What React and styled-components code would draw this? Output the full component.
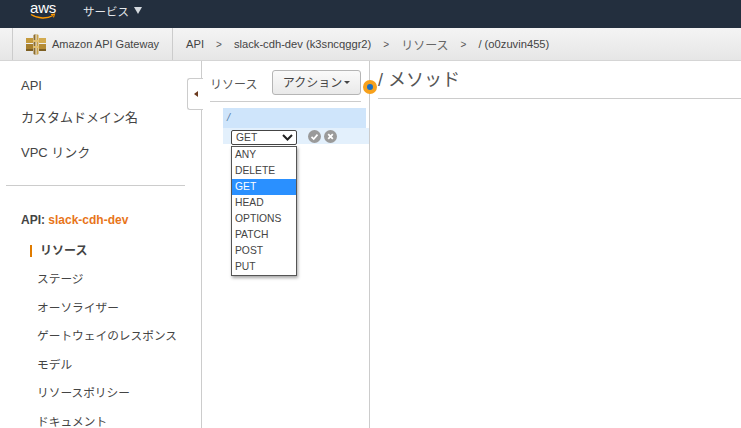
import React from 'react';
import styled, { createGlobalStyle } from 'styled-components';

const GlobalStyle = createGlobalStyle`
  html, body {
    margin: 0;
    padding: 0;
    background: #fff;
  }
  body {
    font-family: "Liberation Sans", "Noto Sans CJK JP", sans-serif;
    color: #444;
  }
`;

const Page = styled.div`
  display: flex;
  flex-direction: column;
  width: 741px;
  height: 428px;
  overflow: hidden;
`;

const TopNav = styled.div`
  display: flex;
  align-items: center;
  flex: none;
  height: 28px;
  padding-left: 30px;
  background: #232f3e;
`;

const AwsLogo = styled.div`
  position: relative;
  width: 26px;
  height: 22px;
  margin-right: 27px;
  margin-top: -5px;
  color: #fff;
  font-size: 15px;
  line-height: 13px;
  text-align: center;
  letter-spacing: -0.2px;
  svg {
    position: absolute;
    left: 0;
    top: 12px;
  }
`;

const Services = styled.div`
  display: flex;
  align-items: center;
  gap: 5px;
  margin-top: -7px;
  font-size: 11.5px;
  color: #e4e7ea;
`;

const Caret = styled.span`
  width: 0;
  height: 0;
  border-left: 4.5px solid transparent;
  border-right: 4.5px solid transparent;
  border-top: 7px solid #d5dadf;
`;

const CrumbBar = styled.div`
  display: flex;
  align-items: stretch;
  flex: none;
  height: 33px;
  box-sizing: border-box;
  padding-left: 12px;
  background: linear-gradient(#f4f4f4, #e6e6e6);
  border-bottom: 1px solid #d5d5d5;
  font-size: 11px;
  color: #444;
`;

const ServiceCell = styled.div`
  display: flex;
  align-items: center;
  gap: 6px;
  width: 161px;
  box-sizing: border-box;
  padding-left: 13px;
  border-left: 1px solid #ccc;
  border-right: 1px solid #ccc;
`;

const Crumbs = styled.div`
  display: flex;
  align-items: center;
  padding-left: 13px;
`;

const Crumb = styled.span`
  color: ${(p) => (p.$light ? '#666' : '#444')};
  font-size: ${(p) => (p.$light ? '12px' : '11.2px')};
`;

const Sep = styled.span`
  margin: 0 12px;
  font-size: 10px;
  color: #555;
`;

const Body = styled.div`
  position: relative;
  display: flex;
  flex: 1;
  min-height: 0;
`;

const Sidebar = styled.nav`
  flex: none;
  width: 202px;
  box-sizing: border-box;
  border-right: 1px solid #ccc;
  padding-top: 7px;
`;

const TopLink = styled.div`
  height: 33.5px;
  padding-left: 21px;
  font-size: 13px;
  line-height: 35px;
  color: #444;
  &:first-child {
    height: 31.5px;
  }
  &:nth-child(2) {
    height: 35.5px;
  }
`;

const SideRule = styled.hr`
  width: 179px;
  height: 1px;
  margin: 16px 0 0 6px;
  border: 0;
  background: #ccc;
`;

const ApiTitle = styled.div`
  margin: 26px 0 9px 21px;
  font-size: 12px;
  line-height: 16px;
  font-weight: 700;
  color: #444;
  span {
    color: #e8751a;
  }
`;

const SubLink = styled.div`
  position: relative;
  height: 28.6px;
  padding-left: ${(p) => (p.$active ? '40px' : '37px')};
  font-size: ${(p) => (p.$active ? '12px' : '11.7px')};
  line-height: 28.6px;
  font-weight: ${(p) => (p.$active ? 700 : 400)};
  color: #444;
  ${(p) =>
    p.$active &&
    `&::before {
      content: '';
      position: absolute;
      left: 30px;
      top: 8px;
      width: 2px;
      height: 12px;
      background: #e07b00;
    }`}
`;

const ToggleTab = styled.div`
  position: absolute;
  left: 187px;
  top: 17px;
  display: flex;
  align-items: center;
  justify-content: center;
  width: 16px;
  height: 32px;
  box-sizing: border-box;
  background: #fff;
  border: 1px solid #ccc;
  border-right: 0;
  border-radius: 3px 0 0 3px;
  &::before {
    content: '';
    border-top: 3px solid transparent;
    border-bottom: 3px solid transparent;
    border-right: 4px solid #6b3a1e;
  }
`;

const ResourcePanel = styled.section`
  position: relative;
  flex: none;
  width: 168px;
  box-sizing: border-box;
  border-right: 1px solid #ccc;
`;

const PanelHead = styled.div`
  display: flex;
  align-items: flex-end;
  justify-content: space-between;
  height: 41px;
  box-sizing: border-box;
  margin: 0 8px;
  padding-bottom: 6px;
  border-bottom: 1px solid #ccc;
  font-size: 12px;
  line-height: 20px;
  color: #555;
`;

const ActionButton = styled.div`
  display: flex;
  align-items: center;
  justify-content: center;
  gap: 2px;
  width: 89px;
  height: 25px;
  box-sizing: border-box;
  background: linear-gradient(#fafafa, #e9e9e9);
  border: 1px solid #b5b5b5;
  border-radius: 3px;
  font-size: 12px;
  color: #444;
  &::after {
    content: '';
    border-left: 3px solid transparent;
    border-right: 3px solid transparent;
    border-top: 3px solid #444;
  }
`;

const RootRow = styled.div`
  height: 20px;
  margin: 6px 3px 0 21px;
  padding-left: 4px;
  background: #cfe5fb;
  font-size: 11px;
  font-style: italic;
  line-height: 19px;
  color: #5a7fa8;
`;

const MethodRow = styled.div`
  display: flex;
  align-items: flex-start;
  height: 16px;
  box-sizing: border-box;
  margin-left: 21px;
  padding: 2px 0 0 8px;
  background: #e3f0fc;
`;

const MethodSelect = styled.div`
  display: flex;
  flex: none;
  align-items: center;
  justify-content: space-between;
  width: 66px;
  height: 15px;
  box-sizing: border-box;
  padding: 0 3px 0 4px;
  background: #fff;
  border: 1px solid #444;
  border-radius: 2px;
  font-size: 10.3px;
  color: #444;
`;

const RoundIcon = styled.svg`
  display: block;
  flex: none;
  width: 13px;
  height: 13px;
  margin-left: ${(p) => p.$gap}px;
`;

const OptionList = styled.ul`
  position: absolute;
  left: 29px;
  top: 85px;
  width: 66px;
  box-sizing: border-box;
  margin: 0;
  padding: 0;
  list-style: none;
  background: #fff;
  border: 1px solid #555;
  box-shadow: 1px 2px 3px rgba(0, 0, 0, 0.35);
`;

const Option = styled.li`
  height: 16px;
  padding-left: 3px;
  font-size: 10.3px;
  line-height: 16px;
  color: ${(p) => (p.$selected ? '#fff' : '#444')};
  background: ${(p) => (p.$selected ? '#2a90ff' : '#fff')};
`;

const DragHandle = styled.span`
  position: absolute;
  left: 161px;
  top: 19px;
  width: 6px;
  height: 6px;
  background: #1b6fc4;
  border: 4px solid #f7a11c;
  border-radius: 50%;
`;

const Main = styled.main`
  flex: 1;
  min-width: 0;
  padding-left: 8px;
`;

const MainTitle = styled.h1`
  height: 38px;
  box-sizing: border-box;
  margin: 0;
  padding-top: 7px;
  border-bottom: 1px solid #ccc;
  font-size: 18px;
  font-weight: 400;
  line-height: 24px;
  color: #555;
`;

const GatewayLogo = () => (
  <svg width="20" height="21" viewBox="0 0 20 21">
    <rect x="0" y="4" width="7" height="5" fill="#c49a3c" />
    <rect x="0" y="10" width="7" height="5" fill="#a67f2e" />
    <rect x="13" y="4" width="7" height="5" fill="#d3ab50" />
    <rect x="13" y="10" width="7" height="5" fill="#b58c36" />
    <rect x="0" y="15" width="7" height="2" fill="#7d5f22" />
    <rect x="13" y="15" width="7" height="2" fill="#7d5f22" />
    <path d="M7.5 1l2-1v21l-2-1z" fill="#8d6d2a" />
    <path d="M12.5 1l-2-1v21l2-1z" fill="#c9a24a" />
    <rect x="7" y="6" width="6" height="2" fill="#e2c070" />
    <rect x="7" y="12" width="6" height="2" fill="#e2c070" />
  </svg>
);

const navTop = ['API', 'カスタムドメイン名', 'VPC リンク'];
const navSub = [
  'ステージ',
  'オーソライザー',
  'ゲートウェイのレスポンス',
  'モデル',
  'リソースポリシー',
  'ドキュメント',
];
const methods = ['ANY', 'DELETE', 'GET', 'HEAD', 'OPTIONS', 'PATCH', 'POST', 'PUT'];

const App = () => (
  <Page>
    <GlobalStyle />
    <TopNav>
      <AwsLogo>
        aws
        <svg width="26" height="8" viewBox="0 0 26 8">
          <path d="M1 1.5C8 6 17 6 23 2.5" fill="none" stroke="#f90" strokeWidth="1.3" />
          <path d="M21 1.5l3.5-.3-1 3.2" fill="none" stroke="#f90" strokeWidth="1.1" />
        </svg>
      </AwsLogo>
      <Services>
        サービス
        <Caret />
      </Services>
    </TopNav>
    <CrumbBar>
      <ServiceCell>
        <GatewayLogo />
        Amazon API Gateway
      </ServiceCell>
      <Crumbs>
        <Crumb>API</Crumb>
        <Sep>&gt;</Sep>
        <Crumb>slack-cdh-dev (k3sncqggr2)</Crumb>
        <Sep>&gt;</Sep>
        <Crumb $light>リソース</Crumb>
        <Sep>&gt;</Sep>
        <Crumb>/ (o0zuvin455)</Crumb>
      </Crumbs>
    </CrumbBar>
    <Body>
      <Sidebar>
        {navTop.map((item) => (
          <TopLink key={item}>{item}</TopLink>
        ))}
        <SideRule />
        <ApiTitle>
          API: <span>slack-cdh-dev</span>
        </ApiTitle>
        <SubLink $active>リソース</SubLink>
        {navSub.map((item) => (
          <SubLink key={item}>{item}</SubLink>
        ))}
      </Sidebar>
      <ToggleTab />
      <ResourcePanel>
        <PanelHead>
          リソース
          <ActionButton>アクション</ActionButton>
        </PanelHead>
        <RootRow>/</RootRow>
        <MethodRow>
          <MethodSelect>
            GET
            <svg width="11" height="7" viewBox="0 0 11 7">
              <path d="M1 1l4.5 4.5L10 1" fill="none" stroke="#222" strokeWidth="2" />
            </svg>
          </MethodSelect>
          <RoundIcon $gap={11} viewBox="0 0 13 13">
            <circle cx="6.5" cy="6.5" r="6.5" fill="#9a9a9a" />
            <path d="M3.5 6.8l2.2 2.2 3.8-4.4" fill="none" stroke="#fff" strokeWidth="1.7" />
          </RoundIcon>
          <RoundIcon $gap={3} viewBox="0 0 13 13">
            <circle cx="6.5" cy="6.5" r="6.5" fill="#9a9a9a" />
            <path d="M4.2 4.2l4.6 4.6M8.8 4.2l-4.6 4.6" fill="none" stroke="#fff" strokeWidth="1.8" />
          </RoundIcon>
        </MethodRow>
        <OptionList>
          {methods.map((m) => (
            <Option key={m} $selected={m === 'GET'}>
              {m}
            </Option>
          ))}
        </OptionList>
        <DragHandle />
      </ResourcePanel>
      <Main>
        <MainTitle>/ メソッド</MainTitle>
      </Main>
    </Body>
  </Page>
);

export default App;
